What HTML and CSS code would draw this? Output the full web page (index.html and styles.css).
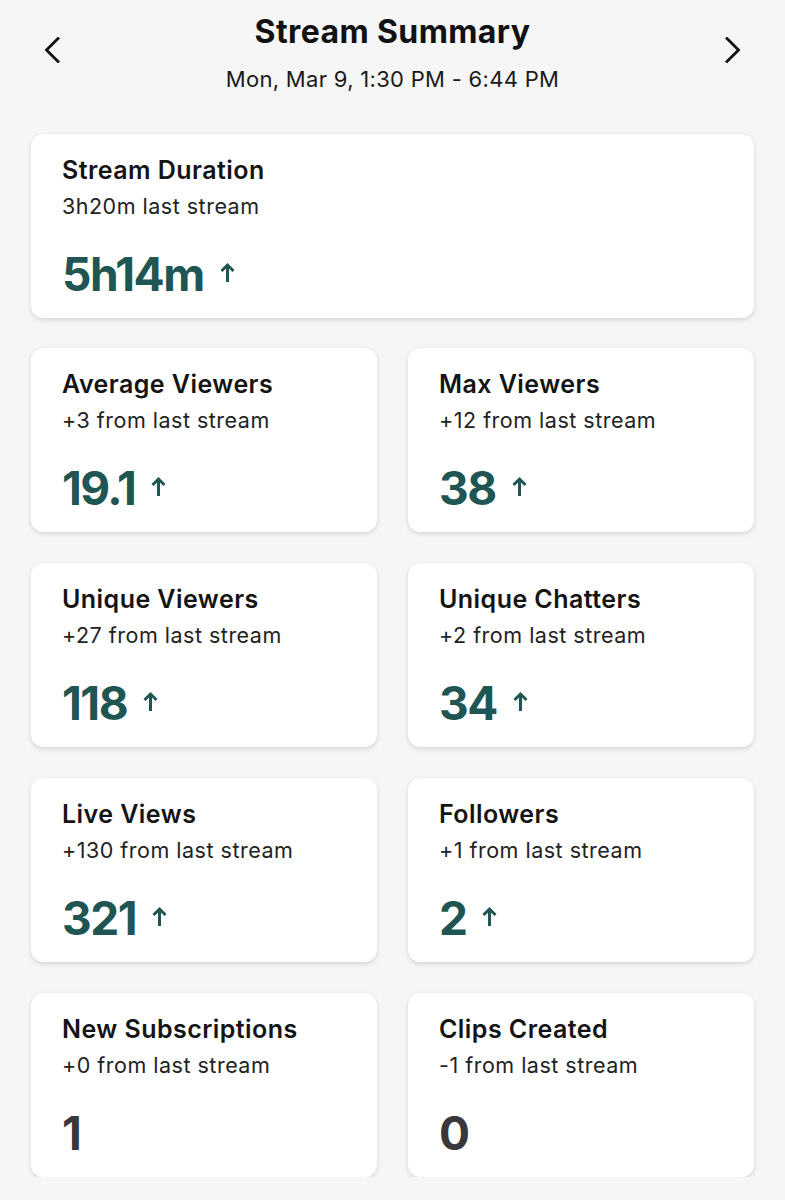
FILE: index.html
```html
<!DOCTYPE html>
<html lang="en">
<head>
<meta charset="utf-8">
<title>Stream Summary</title>
<link rel="stylesheet" href="styles.css">
</head>
<body>
<header class="top">
  <button class="nav-btn" aria-label="Previous">
    <svg viewBox="0 0 16 26" width="16" height="26"><path d="M14 1.5 L2.5 13 L14 24.5" fill="none" stroke="#111" stroke-width="2.8" stroke-linecap="square"/></svg>
  </button>
  <div class="heading">
    <h1 class="title">Stream Summary</h1>
    <div class="date">Mon, Mar 9, 1:30 PM - 6:44 PM</div>
  </div>
  <button class="nav-btn" aria-label="Next">
    <svg viewBox="0 0 16 26" width="16" height="26"><path d="M2 1.5 L13.5 13 L2 24.5" fill="none" stroke="#111" stroke-width="2.8" stroke-linecap="square"/></svg>
  </button>
</header>

<main class="content">
  <section class="card card-wide">
    <div class="card-title">Stream Duration</div>
    <div class="card-sub">3h20m last stream</div>
    <div class="card-value up">5h14m <span class="arrow"><svg viewBox="0 0 17 21" width="17" height="21"><path d="M8.5 20 V3 M2.5 9 L8.5 3 L14.5 9" fill="none" stroke="currentColor" stroke-width="3"/></svg></span></div>
  </section>

  <div class="grid">
    <section class="card">
      <div class="card-title">Average Viewers</div>
      <div class="card-sub">+3 from last stream</div>
      <div class="card-value up">19.1 <span class="arrow"><svg viewBox="0 0 17 21" width="17" height="21"><path d="M8.5 20 V3 M2.5 9 L8.5 3 L14.5 9" fill="none" stroke="currentColor" stroke-width="3"/></svg></span></div>
    </section>
    <section class="card">
      <div class="card-title">Max Viewers</div>
      <div class="card-sub">+12 from last stream</div>
      <div class="card-value up">38 <span class="arrow"><svg viewBox="0 0 17 21" width="17" height="21"><path d="M8.5 20 V3 M2.5 9 L8.5 3 L14.5 9" fill="none" stroke="currentColor" stroke-width="3"/></svg></span></div>
    </section>
    <section class="card">
      <div class="card-title">Unique Viewers</div>
      <div class="card-sub">+27 from last stream</div>
      <div class="card-value up">118 <span class="arrow"><svg viewBox="0 0 17 21" width="17" height="21"><path d="M8.5 20 V3 M2.5 9 L8.5 3 L14.5 9" fill="none" stroke="currentColor" stroke-width="3"/></svg></span></div>
    </section>
    <section class="card">
      <div class="card-title">Unique Chatters</div>
      <div class="card-sub">+2 from last stream</div>
      <div class="card-value up">34 <span class="arrow"><svg viewBox="0 0 17 21" width="17" height="21"><path d="M8.5 20 V3 M2.5 9 L8.5 3 L14.5 9" fill="none" stroke="currentColor" stroke-width="3"/></svg></span></div>
    </section>
    <section class="card">
      <div class="card-title">Live Views</div>
      <div class="card-sub">+130 from last stream</div>
      <div class="card-value up">321 <span class="arrow"><svg viewBox="0 0 17 21" width="17" height="21"><path d="M8.5 20 V3 M2.5 9 L8.5 3 L14.5 9" fill="none" stroke="currentColor" stroke-width="3"/></svg></span></div>
    </section>
    <section class="card">
      <div class="card-title">Followers</div>
      <div class="card-sub">+1 from last stream</div>
      <div class="card-value up">2 <span class="arrow"><svg viewBox="0 0 17 21" width="17" height="21"><path d="M8.5 20 V3 M2.5 9 L8.5 3 L14.5 9" fill="none" stroke="currentColor" stroke-width="3"/></svg></span></div>
    </section>
    <section class="card">
      <div class="card-title">New Subscriptions</div>
      <div class="card-sub">+0 from last stream</div>
      <div class="card-value flat">1</div>
    </section>
    <section class="card">
      <div class="card-title">Clips Created</div>
      <div class="card-sub">-1 from last stream</div>
      <div class="card-value flat">0</div>
    </section>
  </div>
</main>
</body>
</html>
```

FILE: styles.css
```css
* { box-sizing: border-box; }

html, body {
  margin: 0;
  padding: 0;
  background: #f6f6f6;
}

body {
  font-family: Inter, "Noto Sans", "Liberation Sans", sans-serif;
  color: #111;
  width: 785px;
}

.top {
  display: flex;
  align-items: flex-start;
  justify-content: space-between;
  padding: 14px 43px 0 43px;
  height: 134px;
}

.nav-btn {
  background: none;
  border: 0;
  padding: 0;
  margin-top: 22px;
  width: 18px;
  height: 28px;
  display: flex;
  align-items: center;
  justify-content: center;
}

.heading {
  text-align: center;
  display: flex;
  flex-direction: column;
  align-items: center;
}

.title {
  margin: 0;
  font-size: 32px;
  line-height: 36px;
  font-weight: 700;
  letter-spacing: 0.4px;
  color: #111;
}

.date {
  margin-top: 16px;
  font-size: 22px;
  line-height: 26px;
  font-weight: 400;
  letter-spacing: 0.3px;
  color: #1a1a1a;
}

.content {
  padding: 0 31px;
  display: flex;
  flex-direction: column;
  gap: 30px;
}

.grid {
  display: grid;
  grid-template-columns: 1fr 1fr;
  column-gap: 31px;
  row-gap: 31px;
}

.card {
  background: #fff;
  border-radius: 12px;
  box-shadow: 0 2px 5px rgba(0, 0, 0, 0.13), 0 0 1px rgba(0, 0, 0, 0.08);
  padding: 22px 31px 0 31px;
  height: 184px;
}

.card-title {
  font-size: 25px;
  line-height: 28px;
  font-weight: 600;
  color: #141414;
  letter-spacing: 0.45px;
}

.card-sub {
  margin-top: 9px;
  font-size: 21.5px;
  line-height: 26px;
  font-weight: 400;
  letter-spacing: 0.5px;
  color: #222;
}

.card-value {
  margin-top: 28px;
  font-size: 46px;
  line-height: 54px;
  font-weight: 700;
  letter-spacing: -1.5px;
  display: flex;
  align-items: center;
}

.card-value.up { color: #1f5552; }
.card-value.flat { color: #38373c; }

.arrow {
  display: inline-flex;
  margin-left: 15px;
  margin-top: -3px;
}
```
